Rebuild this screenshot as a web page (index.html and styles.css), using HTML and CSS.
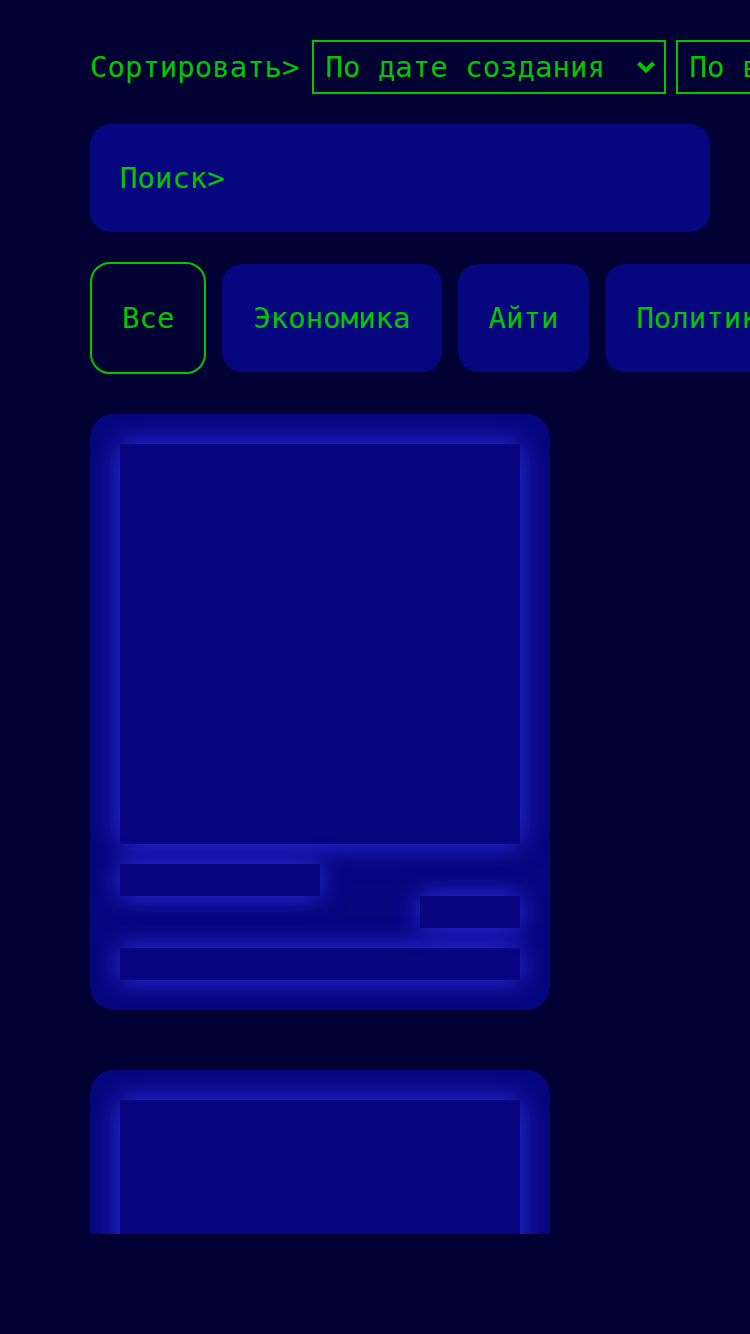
FILE: index.html
```html
<!DOCTYPE html>
<html lang="ru">
<head>
  <meta charset="UTF-8">
  <meta name="viewport" content="width=device-width, initial-scale=1.0">
  <title>Новости</title>
  <link rel="stylesheet" href="styles.css">
</head>
<body>
  <div class="page">
    <div class="sort-row">
      <label for="sortField">Сортировать&gt;</label>
      <div class="select-box">
        <select id="sortField">
          <option>По дате создания</option>
          <option>По названию</option>
        </select>
        <svg class="chevron" width="20" height="14" viewBox="0 0 20 14"><path d="M2.5 3 L10 10.5 L17.5 3" fill="none" stroke="#00c800" stroke-width="4"/></svg>
      </div>
      <div class="select-box">
        <select id="sortOrder">
          <option>По возрастанию</option>
          <option>По убыванию</option>
        </select>
        <svg class="chevron" width="20" height="14" viewBox="0 0 20 14"><path d="M2.5 3 L10 10.5 L17.5 3" fill="none" stroke="#00c800" stroke-width="4"/></svg>
      </div>
    </div>

    <div class="search">
      <label for="searchInput">Поиск&gt;</label>
      <input type="text" id="searchInput">
    </div>

    <div class="tabs">
      <button class="tab active">Все</button>
      <button class="tab">Экономика</button>
      <button class="tab">Айти</button>
      <button class="tab">Политика</button>
      <button class="tab">Спорт</button>
    </div>

    <!-- skeleton cards while news are loading -->
    <div class="feed">
      <div class="card">
        <div class="glow thumb"></div>
        <div class="meta">
          <div class="glow bar-left"></div>
          <div class="glow bar-right"></div>
        </div>
        <div class="glow line"></div>
      </div>
      <div class="card">
        <div class="glow thumb"></div>
        <div class="meta">
          <div class="glow bar-left"></div>
          <div class="glow bar-right"></div>
        </div>
        <div class="glow line"></div>
      </div>
    </div>
  </div>
</body>
</html>
```

FILE: styles.css
```css
body {
  margin: 0;
  background: #000033;
  font-family: "DejaVu Sans Mono", monospace;
  font-size: 29px;
  color: #00c800;
  overflow: hidden;
}
.page {
  padding: 40px 0 0 90px;
  overflow: hidden;
}
.sort-row {
  display: flex;
  align-items: center;
  gap: 12px;
  white-space: nowrap;
}
.sort-row .select-box + .select-box {
  margin-left: -2px;
}
.select-box {
  position: relative;
  flex-shrink: 0;
}
select {
  appearance: none;
  -webkit-appearance: none;
  width: 354px;
  height: 54px;
  padding: 0 50px 0 12px;
  background: transparent;
  border: 2px solid #00c800;
  border-radius: 0;
  color: #00c800;
  font-family: inherit;
  font-size: 29px;
  outline: none;
}
.chevron {
  position: absolute;
  right: 10px;
  top: 20px;
  pointer-events: none;
}
.search {
  display: flex;
  align-items: center;
  width: 620px;
  height: 108px;
  margin-top: 30px;
  padding: 0 30px;
  box-sizing: border-box;
  background: #06067e;
  border-radius: 20px;
}
.search input {
  flex: 1;
  background: transparent;
  border: none;
  outline: none;
  color: #00c800;
  font-family: inherit;
  font-size: 29px;
}
.tabs {
  display: flex;
  align-items: center;
  gap: 16px;
  margin-top: 30px;
  white-space: nowrap;
}
.tab {
  flex-shrink: 0;
  height: 108px;
  padding: 0 31px;
  background: #06067e;
  border: none;
  border-radius: 20px;
  color: #00c800;
  font-family: inherit;
  font-size: 29px;
  cursor: pointer;
}
.tab.active {
  height: 112px;
  padding: 0 30px;
  background: transparent;
  border: 2px solid #00c800;
}
.feed {
  display: flex;
  flex-direction: column;
  gap: 60px;
  width: 460px;
  height: 820px;
  margin-top: 40px;
  overflow: hidden;
}
.card {
  flex-shrink: 0;
  padding: 30px;
  background: #06067e;
  border-radius: 24px;
  overflow: hidden;
}
.glow {
  background: #06067e;
  box-shadow: 0 0 26px #3030f0;
}
.thumb {
  width: 400px;
  height: 400px;
}
.meta {
  display: flex;
  justify-content: space-between;
  height: 64px;
  margin-top: 20px;
}
.bar-left {
  width: 200px;
  height: 32px;
  align-self: flex-start;
}
.bar-right {
  width: 100px;
  height: 32px;
  align-self: flex-end;
}
.line {
  width: 400px;
  height: 32px;
  margin-top: 20px;
}
```
